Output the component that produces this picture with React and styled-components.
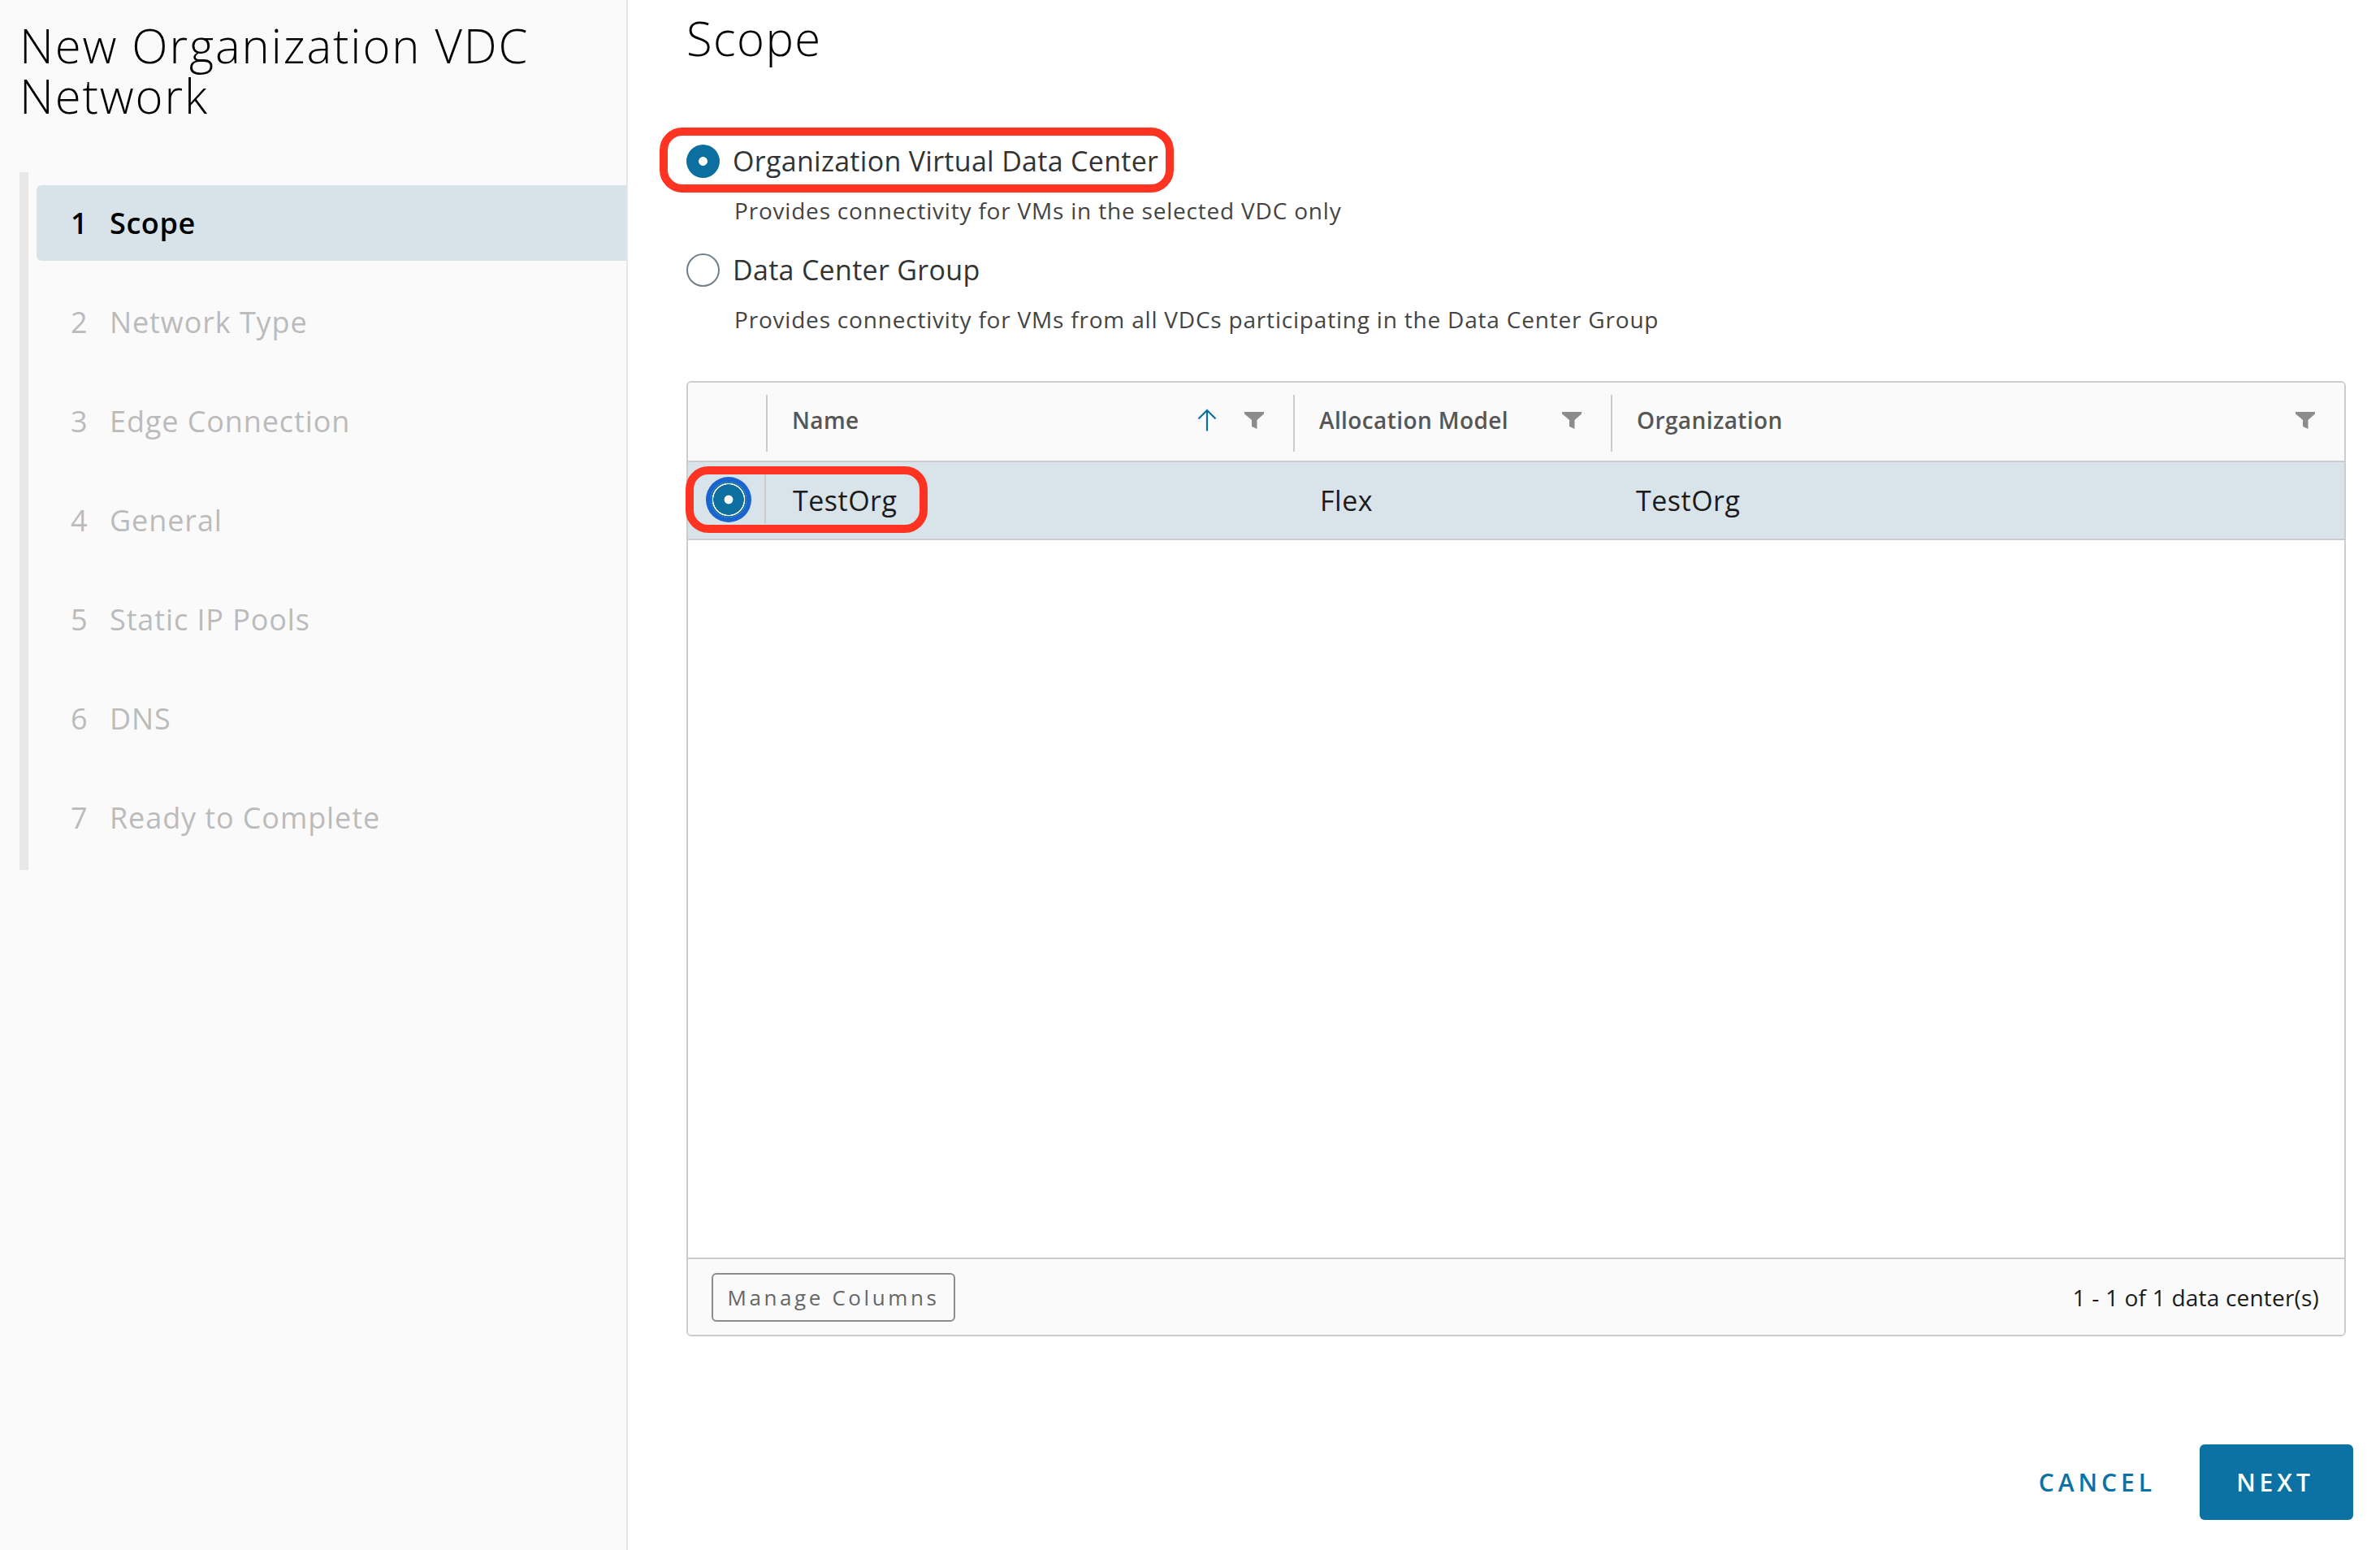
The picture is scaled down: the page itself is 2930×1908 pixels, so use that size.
import React from "react";
import styled, { createGlobalStyle, css } from "styled-components";

const GlobalStyle = createGlobalStyle`
  html, body {
    margin: 0;
    padding: 0;
    height: 100%;
  }
  body {
    font-family: "Open Sans", "Liberation Sans", sans-serif;
    background: #fff;
    color: #000;
  }
  #root {
    height: 100%;
  }
`;

const Page = styled.div`
  display: flex;
  height: 100vh;
  overflow: hidden;
`;

const Sidebar = styled.aside`
  width: 771px;
  flex-shrink: 0;
  background: #fafafa;
  border-right: 2px solid #e6e6e6;
  padding-top: 25px;
`;

const WizardTitle = styled.h1`
  margin: 0 0 0 24px;
  font-size: 58px;
  font-weight: 300;
  line-height: 62px;
  letter-spacing: 1.9px;
  color: #000;
`;

const StepNav = styled.nav`
  margin: 63px 0 0 24px;
  border-left: 11px solid #e8e8e8;
  padding: 16px 0 18px 10px;
  display: flex;
  flex-direction: column;
  gap: 29px;
`;

const StepItem = styled.div`
  height: 93px;
  display: flex;
  align-items: center;
  padding-left: 42px;
  border-radius: 6px 0 0 6px;
  font-size: 36px;
  letter-spacing: 0.9px;
  color: #bbb;
  ${(p) =>
    p.$active &&
    css`
      background: #d8e3e9;
      color: #000;
      font-weight: 600;
      letter-spacing: 0.6px;
    `}
`;

const StepNum = styled.span`
  width: 48px;
`;

const Main = styled.main`
  flex: 1;
  min-width: 0;
  display: flex;
  flex-direction: column;
`;

const Content = styled.div`
  flex: 1;
  padding: 12px 42px 0 72px;
`;

const Heading = styled.h2`
  margin: 0;
  font-size: 58px;
  font-weight: 300;
  line-height: 70px;
  letter-spacing: 1.4px;
  color: #000;
`;

const OptionRow = styled.label`
  position: relative;
  display: flex;
  align-items: center;
  gap: 16px;
  width: fit-content;
  margin-top: ${(p) => p.$top}px;

  ${(p) =>
    p.$marked &&
    css`
      &::after {
        content: "";
        position: absolute;
        inset: -21px -19px -18px -33px;
        border: 10px solid #ff3322;
        border-radius: 28px;
        pointer-events: none;
      }
    `}
`;

const Radio = styled.span`
  width: 41px;
  height: 41px;
  box-sizing: border-box;
  border-radius: 50%;
  flex-shrink: 0;
  ${(p) =>
    p.$checked
      ? css`
          background: radial-gradient(circle, #fff 0 5px, #0d6fa0 5.8px);
        `
      : css`
          background: #fff;
          border: 2px solid #6f8089;
        `}
`;

const OptionLabel = styled.span`
  font-size: 34px;
  line-height: 41px;
  letter-spacing: 0.3px;
  color: #333;
`;

const OptionHint = styled.p`
  margin: 22px 0 0 59px;
  font-size: 28px;
  line-height: 36px;
  letter-spacing: 0.8px;
  color: #444;
`;

const COLS = "96px 649px 391px 1fr";

const Grid = styled.div`
  margin-top: 58px;
  height: 1176px;
  box-sizing: border-box;
  border: 2px solid #ccc;
  border-radius: 6px;
  display: flex;
  flex-direction: column;
`;

const HeaderRow = styled.div`
  display: grid;
  grid-template-columns: ${COLS};
  height: 96px;
  border-bottom: 2px solid #ccc;
  background: #fafafa;
  border-radius: 4px 4px 0 0;
`;

const HeaderCell = styled.div`
  display: flex;
  align-items: center;
  gap: 34px;
  margin: 15px 0 11px;
  padding: 0 36px 8px 30px;
  border-left: ${(p) => (p.$first ? "none" : "2px solid #ccc")};
  font-size: 28px;
  font-weight: 600;
  letter-spacing: 0.4px;
  color: #565656;
`;

const HeaderLabel = styled.span`
  flex: 1;
`;

const DataRow = styled.div`
  position: relative;
  display: grid;
  grid-template-columns: ${COLS};
  height: 94px;
  border-bottom: 2px solid #ccc;
  background: #d9e4ea;
`;

const SelectCell = styled.div`
  margin: 15px 0 18px;
  padding-left: 6px;
  border-right: 2px solid #ccc;
  display: flex;
  align-items: center;
  justify-content: center;
`;

const DataCell = styled.div`
  display: flex;
  align-items: center;
  padding-left: ${(p) => p.$pad || 33}px;
  font-size: 34px;
  letter-spacing: 0.5px;
  color: #1b1b1b;
`;

const RowRadio = styled.span`
  width: 44px;
  height: 44px;
  border-radius: 50%;
  background: radial-gradient(
    circle,
    #fff 0 5px,
    #0d6fa0 5.8px 18.5px,
    #fff 19px 20px,
    #0d6fa0 20.6px
  );
  box-shadow: 0 0 0 6px #1a64cf;
`;

const RowMark = styled.span`
  position: absolute;
  left: -3px;
  top: 5px;
  width: 298px;
  height: 82px;
  box-sizing: border-box;
  border: 10px solid #ff3322;
  border-radius: 28px;
  pointer-events: none;
`;

const GridBody = styled.div`
  flex: 1;
  background: #fff;
`;

const GridFooter = styled.div`
  height: 93px;
  display: flex;
  align-items: center;
  justify-content: space-between;
  padding: 0 31px 0 29px;
  border-top: 2px solid #ccc;
  background: #fafafa;
  border-radius: 0 0 4px 4px;
`;

const ManageButton = styled.button`
  width: 300px;
  height: 60px;
  box-sizing: border-box;
  border: 2px solid #8c8c8c;
  border-radius: 6px;
  background: transparent;
  padding: 0;
  font-family: inherit;
  font-size: 26px;
  letter-spacing: 3.6px;
  color: #666;
`;

const CountText = styled.span`
  font-size: 28px;
  letter-spacing: 0.2px;
  color: #1b1b1b;
`;

const Actions = styled.div`
  display: flex;
  justify-content: flex-end;
  align-items: center;
  gap: 4px;
  padding: 0 33px 37px 0;
`;

const ActionButton = styled.button`
  height: 93px;
  padding: 0 ${(p) => (p.$primary ? 48 : 50)}px 0 ${(p) => (p.$primary ? 45 : 46)}px;
  border: none;
  border-radius: 6px;
  font-family: inherit;
  font-size: 30px;
  font-weight: 600;
  letter-spacing: 5px;
  background: ${(p) => (p.$primary ? "#0b72a3" : "transparent")};
  color: ${(p) => (p.$primary ? "#fff" : "#0b72a3")};
`;

const SortArrow = () => (
  <svg width="24" height="28" viewBox="0 0 24 28" fill="none">
    <path
      d="M12 27.5V2M1.5 12.5L12 2l10.5 10.5"
      stroke="#0d6fa0"
      strokeWidth="2.2"
    />
  </svg>
);

const FilterIcon = () => (
  <svg width="24" height="21" viewBox="0 0 24 21">
    <path d="M0 0h24v2.5L15.5 10v11L9 18V10L0 2.5z" fill="#8c8c8c" />
  </svg>
);

const steps = [
  "Scope",
  "Network Type",
  "Edge Connection",
  "General",
  "Static IP Pools",
  "DNS",
  "Ready to Complete",
];

export default function App() {
  return (
    <>
      <GlobalStyle />
      <Page>
        <Sidebar>
          <WizardTitle>
            New Organization VDC
            <br />
            Network
          </WizardTitle>
          <StepNav>
            {steps.map((s, i) => (
              <StepItem key={s} $active={i === 0}>
                <StepNum>{i + 1}</StepNum>
                {s}
              </StepItem>
            ))}
          </StepNav>
        </Sidebar>

        <Main>
          <Content>
            <Heading>Scope</Heading>

            <OptionRow $top={96} $marked>
              <Radio $checked />
              <OptionLabel>Organization Virtual Data Center</OptionLabel>
            </OptionRow>
            <OptionHint>
              Provides connectivity for VMs in the selected VDC only
            </OptionHint>

            <OptionRow $top={35}>
              <Radio />
              <OptionLabel>Data Center Group</OptionLabel>
            </OptionRow>
            <OptionHint>
              Provides connectivity for VMs from all VDCs participating in the
              Data Center Group
            </OptionHint>

            <Grid>
              <HeaderRow>
                <HeaderCell $first />
                <HeaderCell>
                  <HeaderLabel>Name</HeaderLabel>
                  <SortArrow />
                  <FilterIcon />
                </HeaderCell>
                <HeaderCell>
                  <HeaderLabel>Allocation Model</HeaderLabel>
                  <FilterIcon />
                </HeaderCell>
                <HeaderCell>
                  <HeaderLabel>Organization</HeaderLabel>
                  <FilterIcon />
                </HeaderCell>
              </HeaderRow>

              <DataRow>
                <SelectCell>
                  <RowRadio />
                </SelectCell>
                <DataCell>TestOrg</DataCell>
                <DataCell>Flex</DataCell>
                <DataCell $pad={31}>TestOrg</DataCell>
                <RowMark />
              </DataRow>

              <GridBody />

              <GridFooter>
                <ManageButton>Manage Columns</ManageButton>
                <CountText>1 - 1 of 1 data center(s)</CountText>
              </GridFooter>
            </Grid>
          </Content>

          <Actions>
            <ActionButton>CANCEL</ActionButton>
            <ActionButton $primary>NEXT</ActionButton>
          </Actions>
        </Main>
      </Page>
    </>
  );
}
